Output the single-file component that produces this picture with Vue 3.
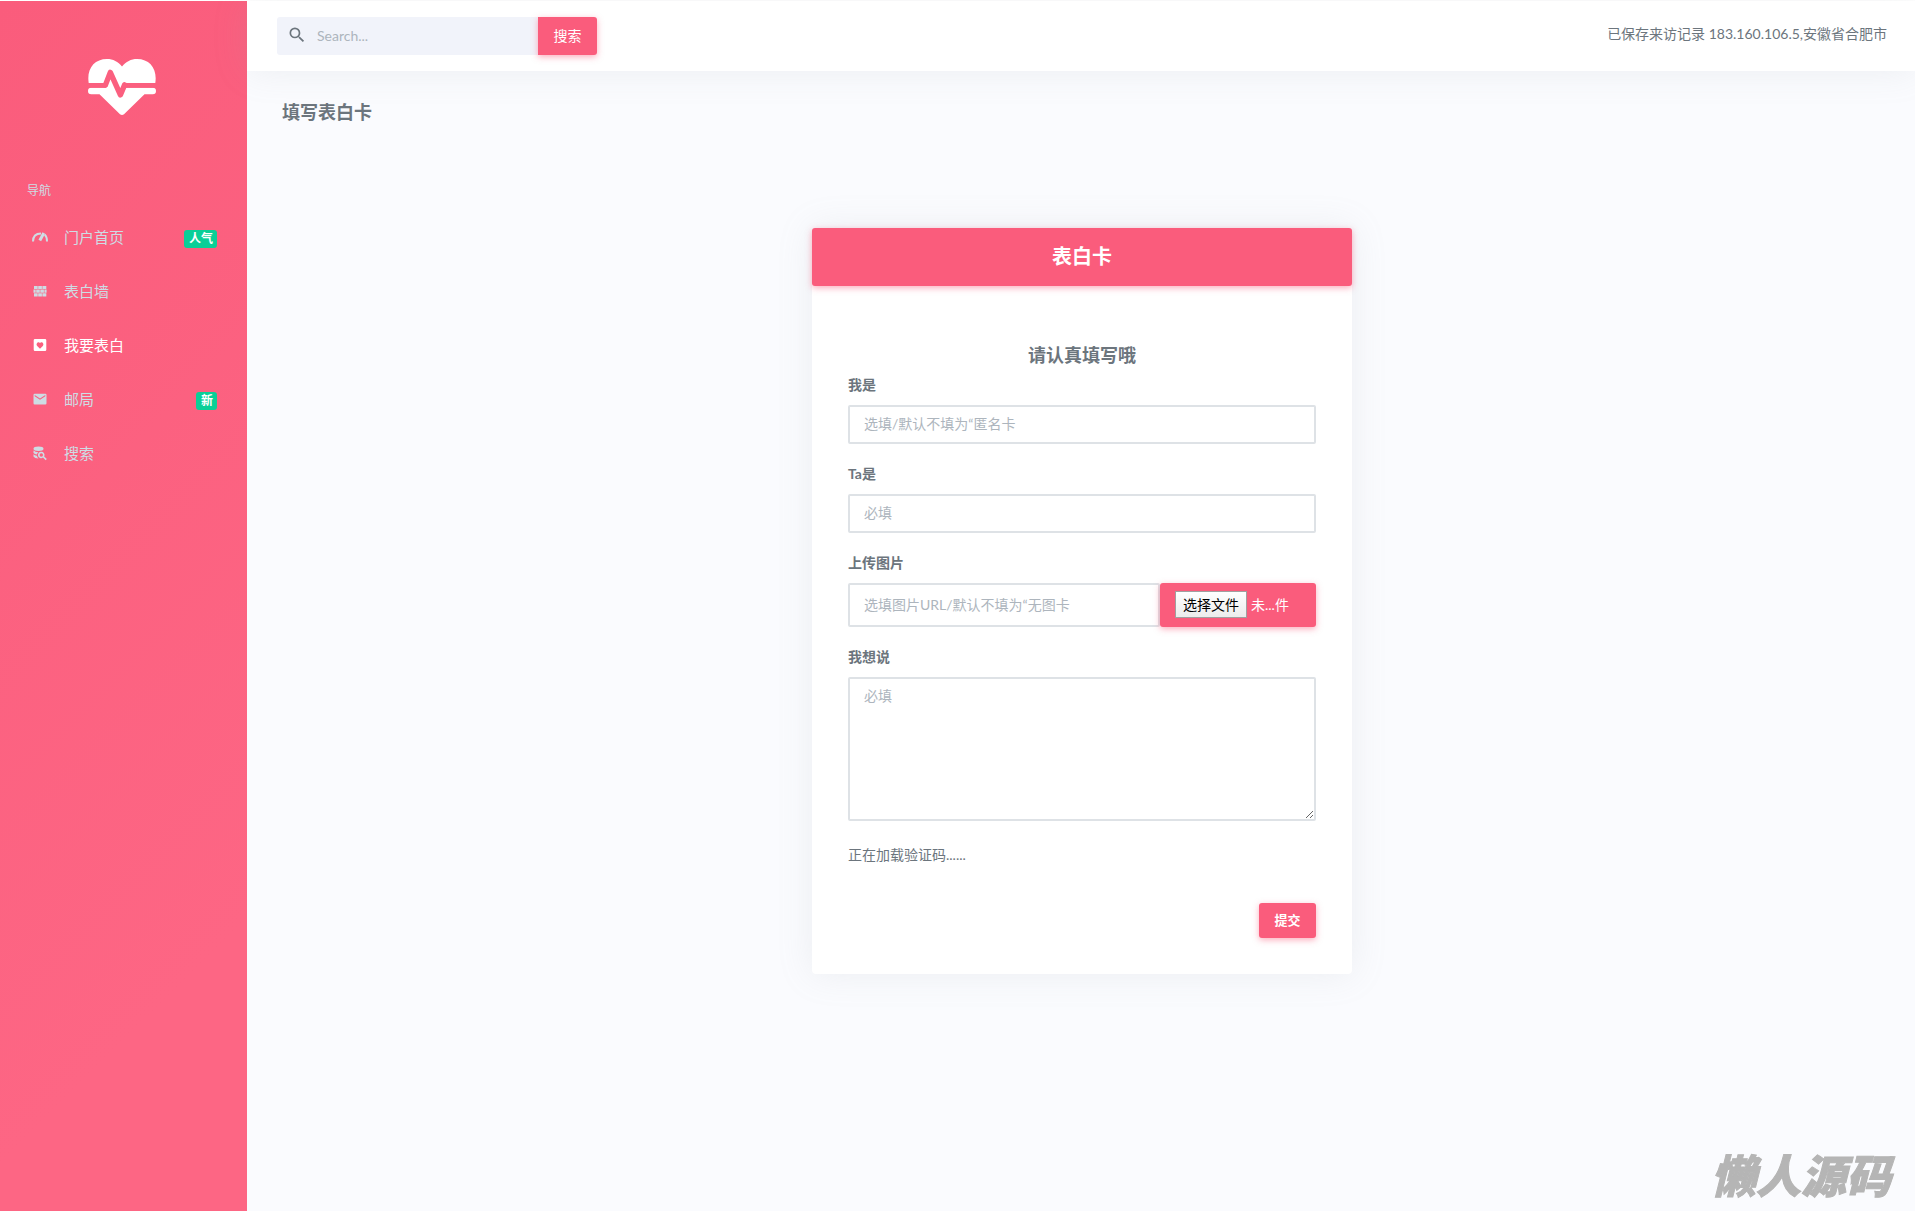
<script setup>
import { ref } from 'vue'

const nav = [
  { text: '门户首页', icon: 'speed', badge: '人气' },
  { text: '表白墙', icon: 'wall' },
  { text: '我要表白', icon: 'heart', active: true },
  { text: '邮局', icon: 'mail', badge: '新' },
  { text: '搜索', icon: 'search' },
]

const keyword = ref('')
const sender = ref('')
const receiver = ref('')
const picture = ref('')
const message = ref('')
</script>

<template>
  <div class="page">
    <aside class="sidebar">
      <a class="logo" href="#" aria-label="首页">
        <svg width="68" height="56" viewBox="0 0 68 56">
          <path fill="#fff" d="M.7 24C-1.500 10 6 0 19 0c6 0 11 2.500 15 7.500C38 2.500 43 0 49 0c13 0 20.500 10 18.300 24z" />
          <path fill="#fff" d="M3.300 28.700h61.400a3.300 3.300 0 0 1 0 6.600H56.500L36 55.200q-2 1.600-4 0L11.500 35.300H3.300a3.300 3.300 0 0 1 0-6.600z" />
          <path fill="#fff" d="M17.500 23H36.500V30H17.500z" />
          <g fill="none" stroke="#fb5f7f" stroke-linejoin="round" stroke-linecap="round">
            <path stroke-width="4.700" d="M-3 26.300H17.500M36.500 26.300H71" />
            <path stroke-width="5.400" d="M17.500 25.900L22.300 13.400 32.400 35.900 36.600 25.900" />
          </g>
        </svg>
      </a>
      <p class="nav-title">导航</p>
      <nav>
        <a v-for="item in nav" :key="item.text" href="#" class="nav-item" :class="{ active: item.active }">
          <svg class="nav-icon" width="16" height="16" viewBox="0 0 16 16">
            <g v-if="item.icon === 'speed'" fill="none" stroke="currentColor" stroke-width="2">
              <path d="M1 12.500C1 7.500 4 4.500 9 4.500M12.700 5.500C14.300 7 15 9 15 12.500" />
              <path d="M11.800 4L7.800 11.500" stroke-width="3" />
            </g>
            <path v-else-if="item.icon === 'wall'" fill="currentColor" d="M2 3h3.700v3H2zM6.200 3h3.700v3H6.200zM10.400 3h3.900v3h-3.900zM1.500 6.500h2.200v3.200H1.500zM4.200 6.500h3.600v3.200H4.200zM8.300 6.500h3.600v3.200H8.300zM12.400 6.500h2.200v3.200h-2.200zM2 10.200h3.700v3.300H2zM6.200 10.200h3.700v3.300H6.200zM10.400 10.200h3.900v3.300h-3.900z" />
            <path v-else-if="item.icon === 'heart'" fill="currentColor" fill-rule="evenodd" d="M3 2h10q1.300 0 1.300 1.300v9.400Q14.300 14 13 14H3q-1.300 0-1.300-1.300V3.300Q1.700 2 3 2zM8 11.800l2.800-2.900C12.600 7 9.800 3.900 8 6 6.200 3.900 3.400 7 5.200 8.900z" />
            <path v-else-if="item.icon === 'mail'" fill="currentColor" fill-rule="evenodd" d="M2.700 2.700h10.600q1.200 0 1.200 1.200v8.400q0 1.200-1.200 1.200H2.700q-1.200 0-1.200-1.200V3.900q0-1.200 1.200-1.200zM2.700 4v1.200L8 8.700l5.300-3.500V4L8 7.500z" />
            <g v-else fill="currentColor">
              <ellipse cx="6.500" cy="3.700" rx="5" ry="2.200" />
              <path d="M1.500 5.600q2 1.700 5 1.600-1.500 1-1.600 2.400-2.200-.2-3.400-1.600zM1.500 9.200q1.300 1.200 3.400 1.500.3 1.700 1.600 2.800-3.800.1-5-2z" />
              <path fill-rule="evenodd" d="M9.300 6.800a3.200 3.200 0 0 1 2.900 4.600l2.600 2.600-1.200 1.200-2.600-2.600a3.200 3.200 0 1 1-1.700-5.800zm0 1.500a1.700 1.700 0 1 0 0 3.400 1.700 1.700 0 0 0 0-3.400z" />
            </g>
          </svg>
          <span class="nav-text">{{ item.text }}</span>
          <span v-if="item.badge" class="badge">{{ item.badge }}</span>
        </a>
      </nav>
    </aside>

    <div class="content">
      <header class="topbar">
        <form class="search" role="search" @submit.prevent>
          <div class="search-box">
            <svg width="20" height="20" viewBox="0 0 24 24" fill="#6c757d" aria-hidden="true">
              <path d="M9.500 3A6.500 6.500 0 0 1 16 9.500c0 1.610-.59 3.090-1.560 4.230l.27.270h.790l5 5-1.500 1.500-5-5v-.790l-.27-.27A6.516 6.516 0 0 1 9.500 16 6.500 6.500 0 0 1 3 9.500 6.500 6.500 0 0 1 9.500 3m0 2C7 5 5 7 5 9.500S7 14 9.500 14 14 12 14 9.500 12 5 9.500 5z" />
            </svg>
            <input v-model="keyword" type="text" placeholder="Search..." aria-label="搜索" />
          </div>
          <button type="submit" class="search-button">搜索</button>
        </form>
        <span class="visitor">已保存来访记录 183.160.106.5,安徽省合肥市</span>
      </header>

      <main>
        <h1>填写表白卡</h1>
        <section class="card">
          <h2>表白卡</h2>
          <form class="card-body" @submit.prevent>
            <h3>请认真填写哦</h3>
            <div class="group">
              <label for="sender">我是</label>
              <input id="sender" v-model="sender" class="control" type="text" placeholder="选填/默认不填为“匿名卡" />
            </div>
            <div class="group">
              <label for="receiver">Ta是</label>
              <input id="receiver" v-model="receiver" class="control" type="text" placeholder="必填" />
            </div>
            <div class="group">
              <label for="picture">上传图片</label>
              <div class="upload">
                <input id="picture" v-model="picture" class="control" type="text" placeholder="选填图片URL/默认不填为“无图卡" />
                <label class="file" for="file">
                  <input id="file" class="file-input" type="file" />
                  <span class="file-button">选择文件</span>
                  <span>未...件</span>
                </label>
              </div>
            </div>
            <div class="group">
              <label for="message">我想说</label>
              <textarea id="message" v-model="message" class="control" placeholder="必填"></textarea>
            </div>
            <p class="captcha">正在加载验证码......</p>
            <div class="actions">
              <button type="submit" class="submit">提交</button>
            </div>
          </form>
        </section>
      </main>
    </div>
    <div class="watermark">懒人源码</div>
  </div>
</template>

<style>
body {
  margin: 0;
  background: #fafbfe;
}
</style>

<style scoped>
* {
  box-sizing: border-box;
}

.page {
  display: flex;
  min-height: 100vh;
  border-top: 1px solid #fff;
  color: #6c757d;
  font: 14px/21px Lato, "Noto Sans CJK SC", sans-serif;
}

h1, h2, h3, p {
  margin: 0;
}

input, textarea, button {
  font: inherit;
}

.sidebar {
  flex: 0 0 247px;
  background: linear-gradient(135deg, #fa5c7c 0%, #fd6684 80%);
}

.logo {
  display: flex;
  justify-content: center;
  padding: 58px 3px 0 0;
}

.nav-title {
  margin-top: 65px;
  padding-left: 27px;
  color: #cedce4;
  font-size: 12px;
  line-height: 22px;
}

.nav-item {
  display: flex;
  align-items: center;
  height: 54px;
  padding: 0 30px 0 32px;
  color: #cedce4;
  font-size: 15px;
  text-decoration: none;
}

nav {
  margin-top: 8px;
}

.nav-icon {
  margin-right: 16px;
}

.active {
  color: #fff;
}

.badge {
  margin-top: 4px;
  margin-left: auto;
  padding: 0 4px 0 5px;
  border-radius: 3px;
  background: #0acf97;
  color: #fff;
  font-size: 12px;
  font-weight: 700;
  line-height: 18px;
}

.content {
  flex: 1;
  min-width: 0;
}

.topbar {
  display: flex;
  align-items: center;
  justify-content: space-between;
  height: 70px;
  padding: 0 28px 0 30px;
  background: #fff;
  box-shadow: 0 0 35px rgba(154, 161, 171, 0.15);
}

.visitor {
  padding-bottom: 5px;
}

.search {
  display: flex;
}

.search-box {
  display: flex;
  align-items: center;
  width: 261px;
  height: 38px;
  padding: 0 0 2px 10px;
  border-radius: 3px 0 0 3px;
  background: #f1f3fa;
}

.search-box input {
  flex: 1;
  min-width: 0;
  padding: 0 10px;
  border: 0;
  outline: 0;
  background: transparent;
}

::placeholder {
  color: #adb5bd;
  opacity: 1;
}

button {
  border: 0;
  background: #fa5c7c;
  color: #fff;
  box-shadow: 0 2px 6px rgba(250, 92, 124, 0.5);
}

.search-button {
  width: 59px;
  height: 38px;
  padding: 0 0 2px;
  border-radius: 0 3px 3px 0;
}

main {
  padding: 26px 30px 80px 32px;
}

h1 {
  padding-left: 3px;
  font-size: 18px;
  line-height: 30px;
}

.card {
  max-width: 540px;
  margin: 101px auto 0;
  border-radius: 4px;
  background: #fff;
  box-shadow: 0 0 35px rgba(154, 161, 171, 0.15);
}

h2 {
  padding-bottom: 2px;
  border-radius: 3px;
  background: #fa5c7c;
  box-shadow: 0 2px 6px rgba(250, 92, 124, 0.5);
  color: #fff;
  font-size: 20px;
  line-height: 56px;
  text-align: center;
}

.card-body {
  padding: 54px 36px 36px;
}

h3 {
  margin-bottom: 6px;
  font-size: 18px;
  line-height: 30px;
  text-align: center;
}

.group {
  margin-bottom: 21px;
}

.group > label {
  display: block;
  margin-bottom: 11px;
  font-weight: 700;
  line-height: 18px;
}

.control {
  display: block;
  width: 100%;
  height: 39px;
  padding: 0 14px 2px;
  border: 2px solid #dee2e6;
  border-radius: 2px;
  background: #fff;
  color: #6c757d;
}

textarea.control {
  height: 144px;
  padding-top: 6px;
  resize: vertical;
}

.upload {
  display: flex;
}

.upload .control {
  flex: 1;
  min-width: 0;
  height: 44px;
}

.file {
  display: flex;
  align-items: center;
  gap: 4px;
  width: 156px;
  padding: 0 0 2px 15px;
  border-radius: 3px;
  background: #fa5c7c;
  box-shadow: 0 2px 6px rgba(250, 92, 124, 0.5);
  color: #fff;
}

.file-input {
  position: absolute;
  width: 1px;
  height: 1px;
  opacity: 0;
}

.file-button {
  padding: 2px 7px;
  border: 1px solid #a0a0a0;
  background: linear-gradient(#fff, #ececec);
  color: #000;
}

.captcha {
  padding-top: 2px;
}

.actions {
  display: flex;
  justify-content: flex-end;
  margin-top: 38px;
}

.submit {
  width: 57px;
  height: 35px;
  padding: 0;
  border-radius: 3px;
  font-size: 13px;
  font-weight: 700;
}

.watermark {
  position: fixed;
  right: 24px;
  bottom: 10px;
  color: #b5b5b5;
  font-family: "Noto Sans CJK SC", sans-serif;
  font-size: 45px;
  font-style: italic;
  font-weight: 900;
  line-height: 54px;
  text-shadow: 0 0 3px #fff;
  -webkit-text-stroke: 1px #b5b5b5;
}
</style>
